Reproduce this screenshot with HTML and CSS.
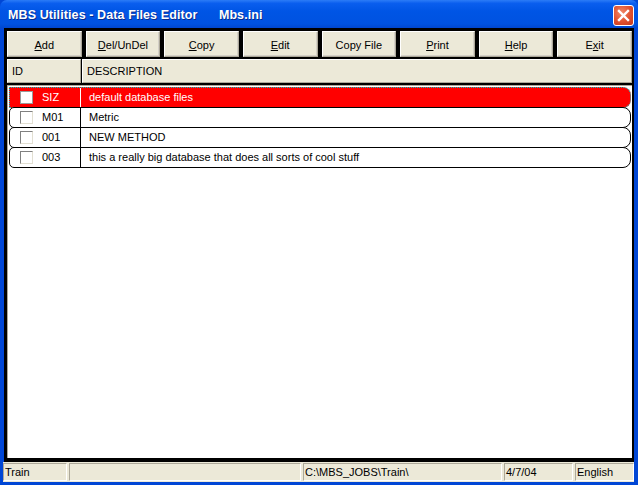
FILE: index.html
```html
<!DOCTYPE html>
<html>
<head>
<meta charset="utf-8">
<link rel="stylesheet" href="styles.css">
</head>
<body>
<div class="window">
  <div class="titlebar">
    <span class="title">MBS Utilities - Data Files Editor&nbsp;&nbsp;&nbsp;&nbsp;&nbsp;&nbsp;Mbs.ini</span>
    <span class="close"><svg width="13" height="13" viewBox="0 0 13 13"><path d="M2 2 L11 11 M11 2 L2 11" stroke="#fff" stroke-width="2.4" stroke-linecap="square"/></svg></span>
  </div>
  <div class="client">
    <div class="toolbar">
      <div class="btn"><u>A</u>dd</div>
      <div class="btn"><u>D</u>el/UnDel</div>
      <div class="btn"><u>C</u>opy</div>
      <div class="btn"><u>E</u>dit</div>
      <div class="btn">Copy File</div>
      <div class="btn"><u>P</u>rint</div>
      <div class="btn"><u>H</u>elp</div>
      <div class="btn">E<u>x</u>it</div>
    </div>
    <div class="header">
      <div class="hcell hid">ID</div>
      <div class="hcell hdesc">DESCRIPTION</div>
    </div>
    <div class="list">
      <div class="row sel">
        <div class="cid"><span class="chk"></span><span>SIZ</span></div>
        <div class="cdesc">default database files</div>
      </div>
      <div class="row">
        <div class="cid"><span class="chk"></span><span>M01</span></div>
        <div class="cdesc">Metric</div>
      </div>
      <div class="row">
        <div class="cid"><span class="chk"></span><span>001</span></div>
        <div class="cdesc">NEW METHOD</div>
      </div>
      <div class="row">
        <div class="cid"><span class="chk"></span><span>003</span></div>
        <div class="cdesc">this a really big database that does all sorts of cool stuff</div>
      </div>
    </div>
  </div>
  <div class="status">
    <div class="panel p1">Train</div>
    <div class="panel p2"></div>
    <div class="panel p3">C:\MBS_JOBS\Train\</div>
    <div class="panel p4">4/7/04</div>
    <div class="panel p5">English</div>
  </div>
</div>
</body>
</html>
```

FILE: styles.css
```css
html, body {
  margin: 0;
  padding: 0;
  background: #ffffff;
}
.window {
  width: 638px;
  height: 485px;
  box-sizing: border-box;
  background: #0046D5;
  display: flex;
  flex-direction: column;
  font-family: "Liberation Sans", Arial, sans-serif;
  font-size: 11px;
  color: #000;
}
.titlebar {
  height: 28px;
  flex: none;
  display: flex;
  align-items: center;
  justify-content: space-between;
  padding: 0 4px 0 8px;
  background: linear-gradient(#2C7CF7 0%, #0A5EEE 12%, #0055E5 40%, #0052E0 85%, #0047CF 100%);
  border-radius: 7px 7px 0 0;
}
.title {
  color: #fff;
  font-weight: bold;
  font-size: 12.5px;
  letter-spacing: 0.1px;
  text-shadow: 1px 1px 0 #0A2B8C;
  padding-top: 1px;
}
.close {
  width: 19px;
  height: 19px;
  border: 1px solid #fff;
  border-radius: 3px;
  background: radial-gradient(circle at 40% 35%, #F08A6A, #E0502E 55%, #C7381B);
  display: flex;
  align-items: center;
  justify-content: center;
  margin-top: 2px;
}
.close svg { display: block; }
.client {
  flex: 1;
  background: #000;
  margin: 0 4px 0 4px;
  padding: 3px 2px 4px 3px;
  display: flex;
  flex-direction: column;
  gap: 2px;
  min-height: 0;
}
.toolbar {
  display: flex;
  gap: 4px;
  height: 26px;
  flex: none;
}
.btn {
  flex: 1;
  background: #ECE9D8;
  border-top: 1px solid #fff;
  border-left: 1px solid #fff;
  border-right: 1px solid #ACA899;
  border-bottom: 1px solid #ACA899;
  box-shadow: inset -1px -1px 0 #D4D0C8;
  display: flex;
  align-items: center;
  justify-content: center;
  padding-top: 1px;
}
.btn u { text-decoration: underline; }
.header {
  display: flex;
  gap: 1px;
  height: 24px;
  flex: none;
}
.hcell {
  background: #ECE9D8;
  border-top: 1px solid #fff;
  border-left: 1px solid #fff;
  border-right: 1px solid #ACA899;
  border-bottom: 1px solid #ACA899;
  display: flex;
  align-items: center;
  padding-left: 4px;
  box-sizing: border-box;
}
.hid { width: 74px; flex: none; }
.hdesc { flex: 1; }
.list {
  flex: 1;
  background: #fff;
  border-top: 1px solid #ACA899;
  border-left: 1px solid #ACA899;
  padding: 1px 1px 0 1px;
  display: flex;
  flex-direction: column;
}
.row {
  height: 21px;
  box-sizing: border-box;
  border: 1px solid #000;
  border-radius: 5px 8px 8px 5px;
  margin-top: -1px;
  display: flex;
  align-items: center;
  background: #fff;
  flex: none;
}
.row:first-child { margin-top: 0; }
.row.sel {
  background: #FF0000;
  color: #fff;
  border: 1px dotted #00C8C8;
  border-radius: 0 8px 8px 0;
}
.cid {
  width: 71px;
  flex: none;
  height: 100%;
  box-sizing: border-box;
  border-right: 1px solid #000;
  display: flex;
  align-items: center;
  padding-left: 10px;
  gap: 9px;
}
.cid span:last-child, .cdesc { position: relative; top: -1px; }
.row.sel .cid { border-right-color: #fff; }
.chk {
  width: 13px;
  height: 13px;
  box-sizing: border-box;
  background: #fff;
  border-top: 1px solid #808080;
  border-left: 1px solid #808080;
  border-right: 1px solid #E2DFD2;
  border-bottom: 1px solid #E2DFD2;
  flex: none;
}
.row.sel .chk {
  border: 1px solid #9A9A9A;
}
.cdesc {
  padding-left: 8px;
  white-space: nowrap;
}
.status {
  height: 19px;
  flex: none;
  margin: 0 4px 3px 3px;
  background: #ECE9D8;
  display: flex;
  gap: 2px;
  padding-top: 1px;
}
.panel {
  box-sizing: border-box;
  height: 18px;
  border-top: 1px solid #ACA899;
  border-left: 1px solid #ACA899;
  border-right: 1px solid #fff;
  border-bottom: 1px solid #fff;
  display: flex;
  align-items: center;
  padding-left: 1px;
  white-space: nowrap;
}
.p1 { width: 64px; }
.p2 { width: 232px; }
.p3 { width: 199px; }
.p4 { width: 69px; }
.p5 { flex: 1; }
```
